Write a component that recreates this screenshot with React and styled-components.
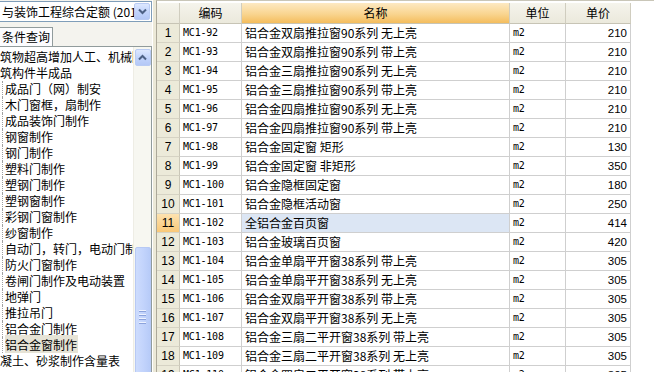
import React from 'react'
import styled, { createGlobalStyle } from 'styled-components'

const GlobalStyle = createGlobalStyle`
  html, body { margin: 0; padding: 0; }
  body {
    width: 654px;
    height: 372px;
    overflow: hidden;
    background: #ece9d8;
    font-family: "Noto Sans CJK SC", "Liberation Sans", sans-serif;
    font-size: 12px;
    color: #000;
  }
`

const treeItems = [
  { text: '建筑物超高增加人工、机械降效', level: 0 },
  { text: '建筑构件半成品', level: 0 },
  { text: '成品门（网）制安', level: 1 },
  { text: '木门窗框，扇制作', level: 1 },
  { text: '成品装饰门制作', level: 1 },
  { text: '钢窗制作', level: 1 },
  { text: '钢门制作', level: 1 },
  { text: '塑料门制作', level: 1 },
  { text: '塑钢门制作', level: 1 },
  { text: '塑钢窗制作', level: 1 },
  { text: '彩钢门窗制作', level: 1 },
  { text: '纱窗制作', level: 1 },
  { text: '自动门，转门，电动门制作', level: 1 },
  { text: '防火门窗制作', level: 1 },
  { text: '卷闸门制作及电动装置', level: 1 },
  { text: '地弹门', level: 1 },
  { text: '推拉吊门', level: 1 },
  { text: '铝合金门制作', level: 1 },
  { text: '铝合金窗制作', level: 1, selected: true },
  { text: '混凝土、砂浆制作含量表', level: 0 },
]

const rows = [
  ['MC1-92', '铝合金双扇推拉窗90系列 无上亮', 'm2', 210],
  ['MC1-93', '铝合金双扇推拉窗90系列 带上亮', 'm2', 210],
  ['MC1-94', '铝合金三扇推拉窗90系列 无上亮', 'm2', 210],
  ['MC1-95', '铝合金三扇推拉窗90系列 带上亮', 'm2', 210],
  ['MC1-96', '铝合金四扇推拉窗90系列 无上亮', 'm2', 210],
  ['MC1-97', '铝合金四扇推拉窗90系列 带上亮', 'm2', 210],
  ['MC1-98', '铝合金固定窗 矩形', 'm2', 130],
  ['MC1-99', '铝合金固定窗 非矩形', 'm2', 350],
  ['MC1-100', '铝合金隐框固定窗', 'm2', 180],
  ['MC1-101', '铝合金隐框活动窗', 'm2', 250],
  ['MC1-102', '全铝合金百页窗', 'm2', 414],
  ['MC1-103', '铝合金玻璃百页窗', 'm2', 420],
  ['MC1-104', '铝合金单扇平开窗38系列 带上亮', 'm2', 305],
  ['MC1-105', '铝合金单扇平开窗38系列 无上亮', 'm2', 305],
  ['MC1-106', '铝合金双扇平开窗38系列 带上亮', 'm2', 305],
  ['MC1-107', '铝合金双扇平开窗38系列 无上亮', 'm2', 305],
  ['MC1-108', '铝合金三扇二平开窗38系列 带上亮', 'm2', 305],
  ['MC1-109', '铝合金三扇二平开窗38系列 无上亮', 'm2', 305],
  ['MC1-110', '铝合金四扇二平开窗38系列 带上亮', 'm2', 305],
]

const SELECTED_ROW = 10

const Page = styled.div`
  display: flex;
  width: 654px;
  height: 372px;
  overflow: hidden;
`

const LeftPane = styled.div`
  width: 152px;
  flex: none;
  display: flex;
  flex-direction: column;
  background: #f4f3ee;
`

const Combo = styled.div`
  height: 21px;
  margin-top: 1px;
  display: flex;
  border: 1px solid #7f9db9;
  border-left: none;
  background: #fff;
  box-sizing: border-box;
`

const ComboText = styled.div`
  flex: 1;
  overflow: hidden;
  white-space: nowrap;
  padding-left: 2px;
  line-height: 19px;
  font-size: 12px;
`

const XpButton = styled.div`
  width: 16px;
  height: ${p => p.$h || 17}px;
  margin: ${p => p.$m || 0};
  flex: none;
  box-sizing: border-box;
  border: 1px solid #b9cbf3;
  border-radius: 2px;
  background: linear-gradient(#dde8ff, #c1d3fb 55%, #b4c8f6);
  display: flex;
  align-items: center;
  justify-content: center;
`

const TabRow = styled.div`
  height: 20px;
  margin-top: 4px;
  display: flex;
  align-items: flex-end;
`

const Tab = styled.div`
  width: 53px;
  height: 19px;
  box-sizing: border-box;
  border: 1px solid #919b9c;
  border-bottom: none;
  border-left: none;
  background: #fcfcfe;
  text-align: center;
  line-height: 18px;
  font-size: 12px;
`

const TreeBox = styled.div`
  flex: 1;
  min-height: 0;
  display: flex;
  background: #fff;
  border-top: 1px solid #919b9c;
  border-right: 1px solid #919b9c;
`

const TreeBody = styled.div`
  flex: 1;
  overflow: hidden;
  padding-top: 2px;
`

const TreeInner = styled.div`
  margin-left: -12px;
`

const TreeItem = styled.div`
  height: 16px;
  line-height: 16px;
  white-space: nowrap;
  font-size: 12px;
  margin-left: ${p => (p.$level ? 14 : 0)}px;
  padding-left: ${p => (p.$level ? 2 : 0)}px;
  border-left: ${p => (p.$level ? '1px dotted #a0a0a0' : 'none')};
`

const Label = styled.span`
  padding: 1px 1px 0 0;
  background: ${p => (p.$selected ? '#e6e3d6' : 'transparent')};
`

const Scrollbar = styled.div`
  width: 17px;
  flex: none;
  display: flex;
  flex-direction: column;
  align-items: center;
  background: #f7f7f1;
  border-left: 1px solid #eeede5;
  overflow: hidden;
  padding-top: 2px;
`

const TrackGap = styled.div`
  height: ${p => p.$h}px;
  flex: none;
`

const Thumb = styled.div`
  width: 16px;
  height: 140px;
  flex: none;
  box-sizing: border-box;
  border: 1px solid #b7c9f4;
  border-radius: 2px;
  background: linear-gradient(90deg, #cddcfd, #c3d4fc 50%, #b7cbf8);
  display: flex;
  flex-direction: column;
  align-items: center;
  padding-top: 62px;
  gap: 2px;
`

const Grip = styled.div`
  width: 7px;
  height: 1px;
  background: #eef3ff;
  border-bottom: 1px solid #8ca3dc;
`

const Splitter = styled.div`
  width: 4px;
  flex: none;
  background: #ece9d8;
  border-left: 1px solid #fff;
  box-sizing: border-box;
`

const RightPane = styled.div`
  flex: 1;
  background: #fff;
  border-left: 1px solid #aca899;
  border-top: 1px solid #c9c6b8;
  padding-top: 2px;
  overflow: hidden;
`

const GridRow = styled.div`
  display: grid;
  grid-template-columns: 23px 62px 268px 56px 65px;
  height: ${p => (p.$header ? 21 : 19)}px;
`

const HeadCell = styled.div`
  box-sizing: border-box;
  border-right: 1px solid #d0cdbf;
  border-bottom: 1px solid #c7c4b5;
  background: ${p =>
    p.$sorted
      ? 'linear-gradient(#fde9c2, #f9d590 55%, #f4bd5d)'
      : 'linear-gradient(#f5f4ec, #ebe9dc)'};
  text-align: center;
  line-height: 20px;
  font-size: 12px;
`

const NumCell = styled.div`
  box-sizing: border-box;
  border-right: 1px solid #cac7b8;
  border-bottom: 1px solid #d6d3c4;
  background: ${p => (p.$active ? 'linear-gradient(#fde2b0, #f9c878)' : '#ecead9')};
  text-align: center;
  font-family: "Liberation Sans", Arial, sans-serif;
  font-size: 12px;
  line-height: 18px;
`

const Cell = styled.div`
  box-sizing: border-box;
  border-right: 1px solid #cfcfcf;
  border-bottom: 1px solid #cfcfcf;
  background: ${p => (p.$active ? '#dce6f4' : '#fff')};
  padding: ${p => (p.$right ? '0 3px 0 0' : '0 0 0 3px')};
  text-align: ${p => (p.$right ? 'right' : 'left')};
  white-space: nowrap;
  overflow: hidden;
  line-height: 18px;
  font-family: ${p =>
    p.$mono
      ? '"DejaVu Sans Mono", "Liberation Mono", monospace'
      : p.$num
      ? '"Liberation Sans", Arial, sans-serif'
      : '"Noto Sans CJK SC", "Liberation Sans", sans-serif'};
  font-size: ${p => (p.$mono ? '10px' : p.$num ? '11.5px' : '12px')};
  letter-spacing: ${p => (p.$mono ? '-0.2px' : 'normal')};
`

const Chevron = ({ up }) => (
  <svg width="9" height="7" viewBox="0 0 9 7">
    <path
      d={up ? 'M1 5.5 L4.5 2 L8 5.5' : 'M1 1.5 L4.5 5 L8 1.5'}
      fill="none"
      stroke="#4d6185"
      strokeWidth="2"
    />
  </svg>
)

export default function App() {
  return (
    <>
      <GlobalStyle />
      <Page>
        <LeftPane>
          <Combo>
            <ComboText>与装饰工程综合定额 (2013)</ComboText>
            <XpButton $m="1px 1px 1px 0">
              <Chevron />
            </XpButton>
          </Combo>
          <TabRow>
            <Tab>条件查询</Tab>
          </TabRow>
          <TreeBox>
            <TreeBody>
              <TreeInner>
                {treeItems.map((it, i) => (
                  <TreeItem key={i} $level={it.level}>
                    <Label $selected={it.selected}>{it.text}</Label>
                  </TreeItem>
                ))}
              </TreeInner>
            </TreeBody>
            <Scrollbar>
              <XpButton>
                <Chevron up />
              </XpButton>
              <TrackGap $h={181} />
              <Thumb>
                <Grip />
                <Grip />
                <Grip />
                <Grip />
              </Thumb>
            </Scrollbar>
          </TreeBox>
        </LeftPane>
        <Splitter />
        <RightPane>
          <GridRow $header>
            <HeadCell />
            <HeadCell>编码</HeadCell>
            <HeadCell $sorted>名称</HeadCell>
            <HeadCell>单位</HeadCell>
            <HeadCell>单价</HeadCell>
          </GridRow>
          {rows.map((r, i) => (
            <GridRow key={r[0]}>
              <NumCell $active={i === SELECTED_ROW}>{i + 1}</NumCell>
              <Cell $mono>{r[0]}</Cell>
              <Cell $active={i === SELECTED_ROW}>{r[1]}</Cell>
              <Cell $mono>{r[2]}</Cell>
              <Cell $num $right>{r[3]}</Cell>
            </GridRow>
          ))}
        </RightPane>
      </Page>
    </>
  )
}
